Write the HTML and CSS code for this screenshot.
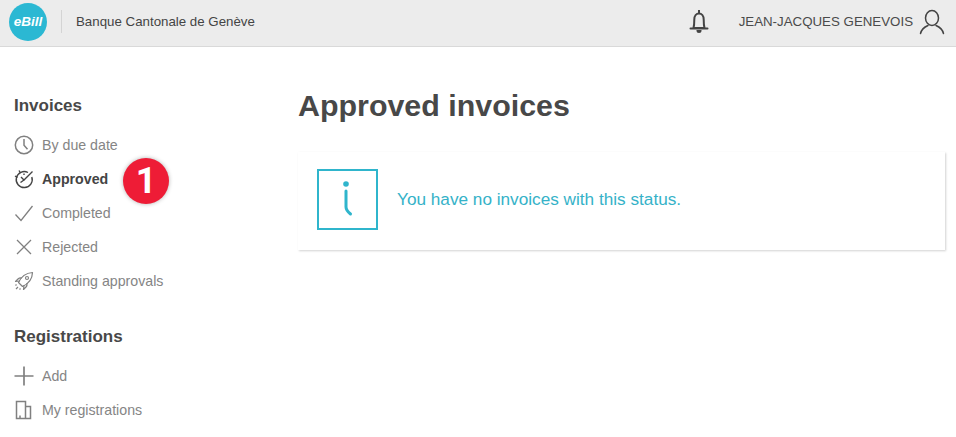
FILE: index.html
```html
<!DOCTYPE html>
<html lang="en">
  <head>
    <meta charset="UTF-8" />
    <title>Approved invoices - eBill</title>
    <link rel="stylesheet" href="styles.css">
  </head>
  <body>
    <header class="topbar">
      <div class="logo">eBill</div>
      <div class="bank">Banque Cantonale de Genève</div>
      <svg class="bell" width="20" height="25" viewBox="0 0 20 25" fill="none" stroke="#444" stroke-width="2">
        <path d="M10 1v3M4.500 19c.6-2 .8-4 .8-8.500 0-3.500 2-6 4.700-6s4.700 2.500 4.700 6c0 4.500 .2 6.500 .8 8.500z" stroke-linejoin="round"/>
        <path d="M1.500 19.500h17" stroke-linecap="round"/>
        <path d="M7.500 21h5v.5a2.500 2.500 0 0 1-5 0z" fill="#444" stroke="none"/>
      </svg>
      <div class="user">JEAN-JACQUES GENEVOIS</div>
      <svg class="avatar" width="26" height="26" viewBox="0 0 26 26" fill="none" stroke="#444" stroke-width="1.500" stroke-linecap="round">
        <ellipse cx="13" cy="9" rx="6.500" ry="7.500"/>
        <path d="M1.500 24.500c1-4.500 4-6.500 7.500-8M24.500 24.500c-1-4.500-4-6.500-7.500-8"/>
      </svg>
    </header>

    <div class="layout">
      <aside class="sidebar">
        <h3>Invoices</h3>
        <ul class="menu">
          <li>
            <svg width="20" height="20" viewBox="0 0 20 20" fill="none" stroke="#808080" stroke-width="1.500">
              <circle cx="10" cy="10" r="8.700"/>
              <path d="M10 4v6.300l3.500 4"/>
            </svg>
            By due date
          </li>
          <li class="active">
            <svg width="20" height="20" viewBox="0 0 20 20" fill="none" stroke="#444" stroke-width="1.400">
              <path d="M14 3.500A8 8 0 1 0 17.800 8"/>
              <path d="M7 8l3 3L18.500 2.500"/>
              <path d="M10 11l-3.500 2.500"/>
              <path d="M1 7l2.500 1.500M5 1.500l1.500 2.500M10 4.500v1.500"/>
            </svg>
            Approved
            <span class="badge">1</span>
          </li>
          <li>
            <svg width="20" height="20" viewBox="0 0 20 20" fill="none" stroke="#808080" stroke-width="1.300">
              <path d="M1.500 11.500l5.500 6L18.500 3"/>
            </svg>
            Completed
          </li>
          <li>
            <svg width="20" height="20" viewBox="0 0 20 20" fill="none" stroke="#808080" stroke-width="1.300">
              <path d="M3 3l14 14M17 3L3 17"/>
            </svg>
            Rejected
          </li>
          <li>
            <svg width="20" height="20" viewBox="0 0 20 20" fill="none" stroke="#808080" stroke-width="1.200" stroke-linejoin="round">
              <path d="M7 14l-2.500-2.500C7 6 11.500 2 18.500 1.500 18.300 8.500 14 13 8.500 15.500z"/>
              <path d="M5.800 10L1.500 10.500 4 8c1-1 2.500-1.200 4-1M10 14l-.5 4.500L12 16c1-1 1.200-2.500 1-4"/>
              <circle cx="13" cy="7" r="1.500"/>
              <path d="M2 18l2-2M1.500 14.500l1-1M5.500 18.500l1-1"/>
            </svg>
            Standing approvals
          </li>
        </ul>

        <h3 class="second">Registrations</h3>
        <ul class="menu">
          <li>
            <svg width="20" height="20" viewBox="0 0 20 20" fill="none" stroke="#808080" stroke-width="1.700">
              <path d="M10 0.500v19M0.500 10h19"/>
            </svg>
            Add
          </li>
          <li>
            <svg width="20" height="20" viewBox="0 0 20 20" fill="none" stroke="#808080" stroke-width="1.500">
              <path d="M2.500 1.500h9v17h-9zM11.500 6.500h5v12h-5z"/>
              <path d="M6 18.500v-3"/>
            </svg>
            My registrations
          </li>
        </ul>
      </aside>

      <main class="content">
        <h1>Approved invoices</h1>
        <div class="notice">
          <div class="notice-icon">
            <svg width="14" height="36" viewBox="0 0 14 36" fill="none" stroke="#2fb5cc" stroke-width="3" stroke-linecap="round">
              <circle cx="5" cy="3" r="2.800" fill="#2fb5cc" stroke="none"/>
              <path d="M5 10v16c0 3 2 5 4.500 7"/>
            </svg>
          </div>
          <p>You have no invoices with this status.</p>
        </div>
      </main>
    </div>
  </body>
</html>
```

FILE: styles.css
```css
* {
  box-sizing: border-box;
  margin: 0;
  padding: 0;
}
body {
  font-family: "Liberation Sans", Arial, sans-serif;
  background: #fff;
  color: #444;
  overflow: hidden;
}
.topbar {
  display: flex;
  align-items: center;
  height: 47px;
  padding: 0 11px 3px 9px;
  background: #ececec;
  border-bottom: 1px solid #d9d9d9;
}
.logo {
  width: 38px;
  height: 38px;
  border-radius: 50%;
  background: #2bb8d3;
  color: #fff;
  font-size: 13.500px;
  font-weight: 700;
  font-style: italic;
  line-height: 38px;
  text-align: center;
}
.bank {
  margin-left: 14px;
  padding-left: 14px;
  border-left: 1px solid #d4d4d4;
  line-height: 23px;
  font-size: 13.300px;
  color: #444;
  flex: 1;
}
.bell {
  margin-right: 30px;
}
.user {
  font-size: 13.300px;
  margin-right: 6px;
  color: #4a4a4a;
}
.layout {
  display: flex;
}
.sidebar {
  width: 298px;
  padding: 49px 0 0 14px;
  flex-shrink: 0;
}
h3 {
  font-size: 17px;
  font-weight: 700;
  line-height: 20px;
  color: #484848;
  margin-bottom: 12px;
}
h3.second {
  margin-top: 29px;
  margin-bottom: 12px;
}
.menu {
  list-style: none;
}
.menu li {
  position: relative;
  display: flex;
  align-items: center;
  height: 34px;
  font-size: 14.200px;
  color: #858585;
}
.menu li svg {
  margin-right: 8px;
  flex-shrink: 0;
}
.menu li.active {
  color: #444;
  font-weight: 700;
}
.badge {
  position: absolute;
  left: 109px;
  top: -4px;
  width: 46px;
  height: 46px;
  border-radius: 50%;
  background: #ee1c36;
  box-shadow: 0 0 4px rgba(0, 0, 0, 0.3);
  color: #fff;
  font-family: Roboto, sans-serif;
  font-size: 36px;
  font-weight: 700;
  line-height: 46px;
  text-align: center;
}
.content {
  width: 647px;
  padding-top: 39px;
}
h1 {
  font-size: 30.400px;
  font-weight: 700;
  line-height: 38px;
  color: #484848;
  margin-bottom: 28px;
}
.notice {
  display: flex;
  align-items: center;
  height: 98px;
  padding: 0 0 4px 19px;
  background: #fff;
  box-shadow: 1px 1px 2px rgba(0, 0, 0, 0.18);
}
.notice-icon {
  display: flex;
  align-items: center;
  justify-content: center;
  width: 61px;
  height: 61px;
  border: 2px solid #2fb5cc;
  margin-right: 19px;
}
.notice p {
  font-size: 17.200px;
  color: #35b2c8;
}
```
